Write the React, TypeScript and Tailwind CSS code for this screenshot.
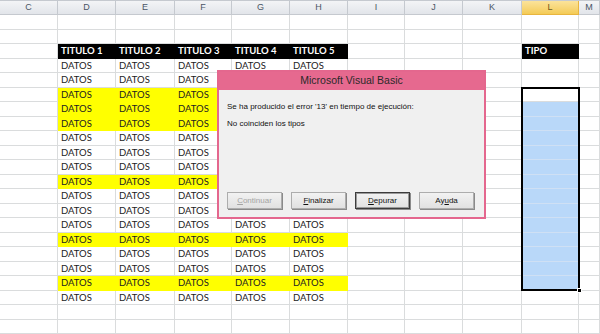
const COLS = ["C", "D", "E", "F", "G", "H", "I", "J", "K", "L", "M"];
const WIDTHS = ["w-[58px]", "w-[58px]", "w-[59px]", "w-[57px]", "w-[58px]", "w-[58px]", "w-[57px]", "w-[58px]", "w-[59px]", "w-[57px]", "w-[21px]"];

// row kinds: 0 empty, 1 header, 2 datos, 3 datos yellow
const ROWS = [0, 0, 1, 2, 2, 3, 3, 3, 2, 2, 2, 3, 2, 2, 2, 3, 2, 2, 3, 2, 0, 0];
const TITLES = ["TITULO 1", "TITULO 2", "TITULO 3", "TITULO 4", "TITULO 5"];

function Cell({ row, col }: { row: number; col: number }) {
  const kind = ROWS[row];
  const inTable = col >= 1 && col <= 5;
  const isL = col === 9;
  const selected = isL && row >= 6 && row <= 18;
  // cells hidden behind the dialog
  const hidden = (col === 4 || col === 5) && row >= 4 && row <= 13;

  let cls = "border-[#dadcdd] bg-white";
  let text = "";
  let textCls = "text-[#222]";
  if (kind === 1 && (inTable || isL)) {
    cls = "border-black bg-black";
    text = isL ? "TIPO" : TITLES[col - 1];
    textCls = "text-white font-bold";
  } else if (kind === 3 && inTable) {
    cls = "border-[#ffff00] bg-[#ffff00]";
    text = "DATOS";
  } else if (kind === 2 && inTable) {
    text = "DATOS";
  }
  if (selected) cls = "border-[#cfe0f4] bg-[#b9d8f9]";
  if (hidden) text = "";

  return (
    <div
      className={`${WIDTHS[col]} h-full shrink-0 border-r border-b flex items-end pl-[3px] pb-[2px] overflow-hidden ${cls}`}
    >
      <span className={`text-[9.5px] leading-none whitespace-nowrap ${textCls}`}>{text}</span>
    </div>
  );
}

function Btn({
  label,
  u,
  disabled,
  def,
}: {
  label: string;
  u: number;
  disabled?: boolean;
  def?: boolean;
}) {
  return (
    <div
      className={`w-[55px] h-[17px] flex items-center justify-center border ${
        def ? "border-[#3c3c3c]" : "border-[#adadad]"
      } bg-gradient-to-b from-[#f2f2f2] to-[#e1e1e1] shadow-[1px_1px_0_#8a8a8a]`}
    >
      <div
        className={`w-full h-full flex items-center justify-center ${
          def ? "border border-[#9a9a9a]" : ""
        }`}
      >
        <span className={`text-[8px] leading-none ${disabled ? "text-[#a3a3a3]" : "text-[#111]"}`}>
          {label.slice(0, u)}
          <span className="underline">{label[u]}</span>
          {label.slice(u + 1)}
        </span>
      </div>
    </div>
  );
}

export default function App() {
  return (
    <div className="relative w-[600px] h-[334px] overflow-hidden bg-white font-['Lato','Open_Sans',sans-serif]">
      {/* column headers */}
      <div className="flex h-[15px] border-t border-[#c5c9cf]">
        {COLS.map((c, i) => (
          <div
            key={c}
            className={`${WIDTHS[i]} shrink-0 h-full flex items-center justify-center border-r border-b text-[9px] font-['Liberation_Sans',sans-serif] ${
              c === "L"
                ? "bg-gradient-to-b from-[#fbe39a] to-[#f4cb55] border-[#e8b53f] text-[#6b5a1f]"
                : "bg-gradient-to-b from-[#f3f4f6] to-[#e2e5ea] border-[#c5c9cf] text-[#4a5565]"
            }`}
          >
            {c}
          </div>
        ))}
      </div>

      {/* sheet rows */}
      <div className="flex flex-col">
        {ROWS.map((_, r) => (
          <div key={r} className="flex h-[14.5px]">
            {COLS.map((c, i) => (
              <Cell key={c} row={r} col={i} />
            ))}
          </div>
        ))}
      </div>

      {/* selection in column L */}
      <div className="absolute left-[521px] top-[87px] w-[59px] h-[204px] border-2 border-black" />
      <div className="absolute left-[577px] top-[288px] w-[5px] h-[5px] bg-black border border-white" />

      {/* VBA error dialog */}
      <div className="absolute left-[217px] top-[70px] w-[269px] h-[149px] border-2 border-[#e4678e] bg-[#f0f0f0] flex flex-col font-['Liberation_Sans',sans-serif]">
        <div className="h-[18px] bg-[#e6698f] flex items-center justify-center">
          <span className="text-[10.5px] text-[#2a2a2a]">Microsoft Visual Basic</span>
        </div>
        <div className="flex-1 flex flex-col px-[8px] pt-[13px] text-[8px] text-[#111] leading-none">
          <p>Se ha producido el error '13' en tiempo de ejecución:</p>
          <p className="mt-[9px]">No coinciden los tipos</p>
        </div>
        <div className="flex gap-[9px] pl-[8px] pb-[8px]">
          <Btn label="Continuar" u={0} disabled />
          <Btn label="Finalizar" u={0} />
          <Btn label="Depurar" u={0} def />
          <Btn label="Ayuda" u={2} />
        </div>
      </div>
    </div>
  );
}
